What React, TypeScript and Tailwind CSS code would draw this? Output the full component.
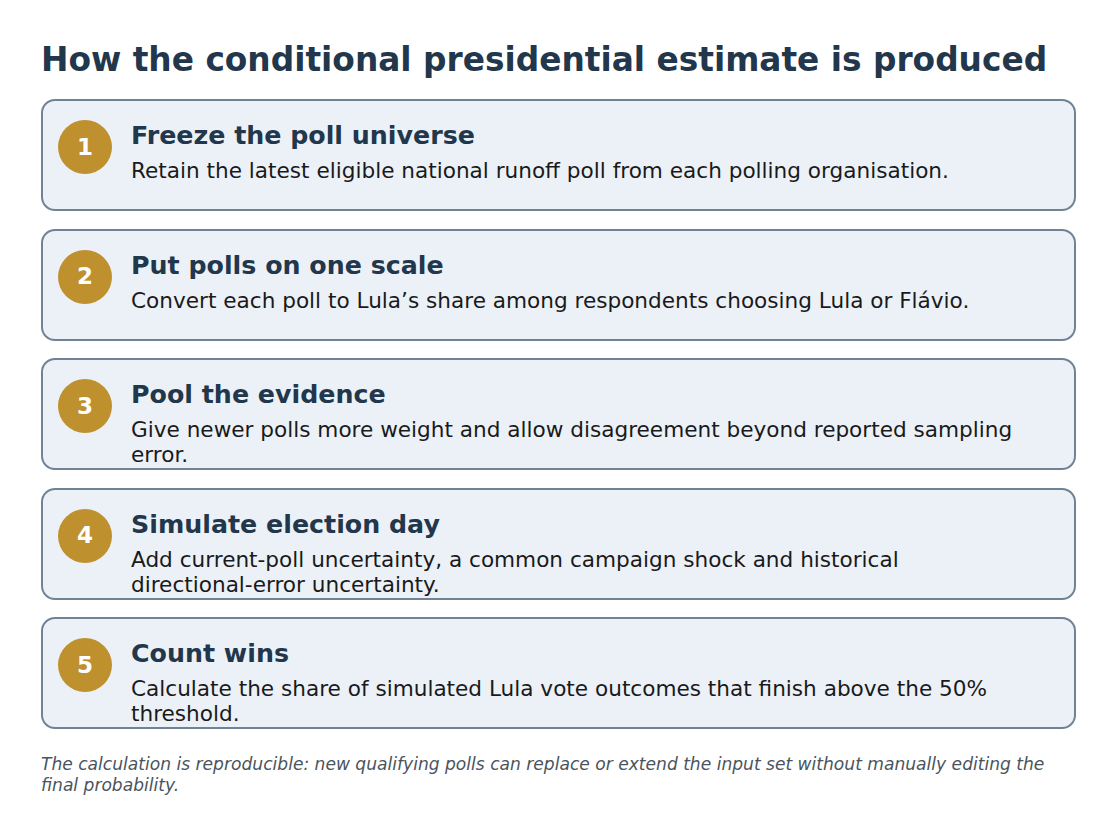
const STEPS = [
  {
    title: 'Freeze the poll universe',
    body: 'Retain the latest eligible national runoff poll from each polling organisation.',
  },
  {
    title: 'Put polls on one scale',
    body: 'Convert each poll to Lula’s share among respondents choosing Lula or Flávio.',
  },
  {
    title: 'Pool the evidence',
    body: 'Give newer polls more weight and allow disagreement beyond reported sampling error.',
  },
  {
    title: 'Simulate election day',
    body: (
      <>
        Add current-poll uncertainty, a common campaign shock and historical{' '}
        <span className="whitespace-nowrap">directional-error</span> uncertainty.
      </>
    ),
  },
  {
    title: 'Count wins',
    body: 'Calculate the share of simulated Lula vote outcomes that finish above the 50% threshold.',
  },
]

function StepCard({ n, title, body }: { n: number; title: string; body: React.ReactNode }) {
  return (
    <div className="flex h-[112px] w-[1035px] rounded-[14px] border-2 border-[#708395] bg-[#ecf1f8] pl-[15px] pr-[28px] pt-[20px]">
      <div className="-mt-[1px] flex h-[54px] w-[54px] shrink-0 items-center justify-center rounded-full bg-[#bf902e] text-[23px] font-bold text-white">
        {n}
      </div>
      <div className="ml-[19px] flex flex-col">
        <div className="text-[25.3px] font-bold leading-[30px] text-[#22374b]">{title}</div>
        <div className="mt-[7px] text-[21.6px] leading-[25px] text-[#1a1a1a]">{body}</div>
      </div>
    </div>
  )
}

export default function App() {
  return (
    <div className="min-h-[837px] w-[1118px] bg-white pl-[41px] pt-[38px] font-['DejaVu_Sans',sans-serif]">
      <h1 className="text-[32.8px] font-bold leading-[44px] text-[#22374b]">
        How the conditional presidential estimate is produced
      </h1>
      <div className="mt-[17px] flex flex-col gap-[17.5px]">
        {STEPS.map((s, i) => (
          <StepCard key={s.title} n={i + 1} title={s.title} body={s.body} />
        ))}
      </div>
      <p className="mt-[25px] w-[1030px] text-[17.1px] italic leading-[21px] text-[#4a545e]">
        The calculation is reproducible: new qualifying polls can replace or extend the input set without manually
        editing the final probability.
      </p>
    </div>
  )
}
